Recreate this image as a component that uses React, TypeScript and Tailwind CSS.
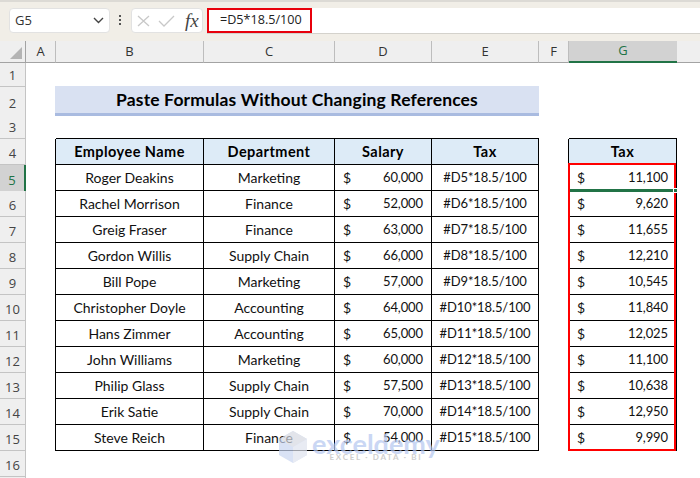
import React from "react";

const cols = "grid grid-cols-[26px_30px_148px_131px_97px_107px_30px_108px_24px]";
const line = "border-r border-b border-black";
const head = "flex items-center justify-center bg-[#ddebf7] text-[14.5px] font-bold tracking-[0.45px] text-black border-r border-b border-black";
const rowHead = "flex items-end justify-center border-r border-b border-[#c4c4c4] bg-[#efefef] pb-[1px] font-['Open_Sans',sans-serif] text-[13px] leading-[20px] text-[#444]";

const rows = [
  ["Roger Deakins", "Marketing", "60,000", "#D5*18.5/100", "11,100"],
  ["Rachel Morrison", "Finance", "52,000", "#D6*18.5/100", "9,620"],
  ["Greig Fraser", "Finance", "63,000", "#D7*18.5/100", "11,655"],
  ["Gordon Willis", "Supply Chain", "66,000", "#D8*18.5/100", "12,210"],
  ["Bill Pope", "Marketing", "57,000", "#D9*18.5/100", "10,545"],
  ["Christopher Doyle", "Accounting", "64,000", "#D10*18.5/100", "11,840"],
  ["Hans Zimmer", "Accounting", "65,000", "#D11*18.5/100", "12,025"],
  ["John Williams", "Marketing", "60,000", "#D12*18.5/100", "11,100"],
  ["Philip Glass", "Supply Chain", "57,500", "#D13*18.5/100", "10,638"],
  ["Erik Satie", "Supply Chain", "70,000", "#D14*18.5/100", "12,950"],
  ["Steve Reich", "Finance", "54,000", "#D15*18.5/100", "9,990"],
];

function Money({ value }: { value: string }) {
  return (
    <div className={`flex items-center justify-between pl-[8px] pr-[8px] ${line}`}>
      <span>$</span>
      <span className="text-[13px] tracking-[-0.1px]">{value}</span>
    </div>
  );
}

function ColHead({ label, active }: { label: string; active?: boolean }) {
  return (
    <div
      className={
        active
          ? "flex items-center justify-center border-b-2 border-[#217346] bg-[#d2d2d2] text-[#217346]"
          : "flex items-center justify-center border-r border-b border-r-[#bdbdbd] border-b-[#a3a3a3] bg-[#efefef] text-[#333]"
      }
    >
      {label}
    </div>
  );
}

function EmptyRow({ n, children }: { n: number; children?: React.ReactNode }) {
  return (
    <div className={`${cols} h-[26px]`}>
      <div className={rowHead}>{n}</div>
      {children}
    </div>
  );
}

export default function App() {
  return (
    <div className="relative h-[478px] w-[700px] overflow-hidden bg-white font-['Lato',sans-serif] text-[14px] text-[#111]">
      {/* formula bar */}
      <div className="flex h-[41px] items-start border-t-2 border-[#dcdad5] bg-[#f1eee7] pt-[6px] font-['Open_Sans',sans-serif] text-[13px]">
        <div className="ml-[9px] flex h-[25px] w-[101px] items-center justify-between rounded-[4px] border border-[#e2e2e2] bg-white pl-[5px] pr-[5px] text-[#333]">
          G5
          <svg width="11" height="7" viewBox="0 0 11 7" fill="none" stroke="#444" strokeWidth="1.4"><path d="M1 1l4.5 4.5L10 1" /></svg>
        </div>
        <div className="ml-[9px] mr-[10px] mt-[7px] flex flex-col gap-[2px]">
          <span className="h-[2px] w-[2px] bg-[#555]" />
          <span className="h-[2px] w-[2px] bg-[#555]" />
          <span className="h-[2px] w-[2px] bg-[#555]" />
        </div>
        <div className="flex h-[25px] w-[72px] items-center rounded-[4px] border border-[#e2e2e2] bg-white pl-[5px]">
          <svg width="13" height="12" viewBox="0 0 13 12" stroke="#c8c8c8" strokeWidth="1.3"><path d="M1 1l11 10M12 1L1 11" /></svg>
          <svg className="ml-[8px]" width="17" height="12" viewBox="0 0 17 12" fill="none" stroke="#c8c8c8" strokeWidth="1.3"><path d="M1 6l5 5L16 1" /></svg>
          <span className="ml-[10px] font-['Liberation_Serif',serif] text-[19px] italic leading-none text-[#444]">fx</span>
        </div>
        <div className="ml-[4px] flex h-[26px] flex-1 items-stretch border-b border-[#d4d2cc] bg-white">
          <div className="flex w-[105px] items-center border-2 border-[#e8000b] pl-[11px] text-[12.6px] text-[#222]">=D5*18.5/100</div>
        </div>
      </div>

      {/* sheet */}
      <div className={`${cols} h-[20px] font-['Open_Sans',sans-serif] text-[13px]`}>
        <div className="relative border-r border-b border-[#a3a3a3] bg-[#efefef]">
          <span className="absolute right-[3px] bottom-[3px] h-0 w-0 border-b-[12px] border-l-[12px] border-b-[#b4b4b4] border-l-transparent" />
        </div>
        <ColHead label="A" />
        <ColHead label="B" />
        <ColHead label="C" />
        <ColHead label="D" />
        <ColHead label="E" />
        <ColHead label="F" />
        <ColHead label="G" active />
        <div className="border-b border-[#a3a3a3] bg-[#efefef]" />
      </div>

      <EmptyRow n={1} />
      <EmptyRow n={2}>
        <div />
        <div className="col-span-4 -my-px -ml-px flex items-center justify-center border-b-[3px] border-[#a9bbe0] bg-[#d9e1f2] pt-[1px] text-[17.5px] font-bold tracking-[0.15px] text-black">
          Paste Formulas Without Changing References
        </div>
      </EmptyRow>
      <EmptyRow n={3}>
        <div />
        <div className="col-span-4 border-b border-black" />
        <div />
        <div className="border-b border-black" />
      </EmptyRow>
      <EmptyRow n={4}>
        <div className="border-r border-black" />
        <div className={head}>Employee Name</div>
        <div className={head}>Department</div>
        <div className={head}>Salary</div>
        <div className={head}>Tax</div>
        <div className="border-r border-black" />
        <div className={head}>Tax</div>
      </EmptyRow>
      {rows.map((r, i) => (
        <div key={r[0]} className={`${cols} h-[26px]`}>
          <div
            className={
              i === 0
                ? "flex items-end justify-center border-r-2 border-[#217346] bg-[#d2d2d2] pb-[1px] font-['Open_Sans',sans-serif] text-[13px] leading-[20px] text-[#217346]"
                : rowHead
            }
          >
            {i + 5}
          </div>
          <div className="border-r border-black" />
          <div className={`flex items-center justify-center ${line}`}>{r[0]}</div>
          <div className={`flex items-center justify-center ${line}`}>{r[1]}</div>
          <Money value={r[2]} />
          <div className={`flex items-center justify-center text-[13px] tracking-[-0.1px] ${line}`}>{r[3]}</div>
          <div className="border-r border-black" />
          <Money value={r[4]} />
        </div>
      ))}
      <EmptyRow n={16} />
      <div className={`${cols} h-[26px]`}>
        <div className={rowHead} />
      </div>

      {/* selection overlays */}
      <div className="absolute top-[163px] left-[568px] h-[288px] w-[108px] border-[2.5px] border-[#ff0000]" />
      <div className="absolute top-[189px] left-[570px] z-10 h-[3px] w-[104px] bg-[#217346]" />
      <div className="absolute top-[188px] left-[673px] z-10 h-[5px] w-[5px] border border-white bg-[#217346]" />

      {/* watermark */}
      <div className="pointer-events-none absolute top-[431px] left-[279px] flex items-start gap-[5px] opacity-70">
        <svg width="28" height="32" viewBox="0 0 28 32">
          <path d="M14 0l14 8v16l-14 8L0 24V8z" fill="#c9d6f2" />
          <path d="M14 0l14 8-14 8L0 8z" fill="#d6d9e2" />
          <path d="M14 16l14-8v16l-14 8z" fill="#dfe3ee" />
        </svg>
        <div className="flex flex-col items-center">
          <span className="text-[27px] font-bold leading-[26px] text-[#b5c7f0]">exceldemy</span>
          <span className="-mt-[4px] text-[8px] font-bold leading-[8px] tracking-[1.7px] text-[#bbbbbb]">EXCEL · DATA · BI</span>
        </div>
      </div>
    </div>
  );
}
